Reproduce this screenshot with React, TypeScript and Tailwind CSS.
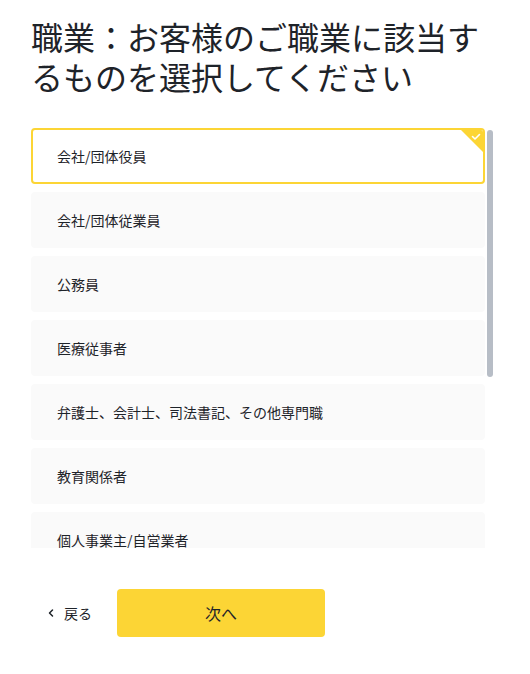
import React, { useState } from "react";
import { ChevronLeft } from "lucide-react";

const occupations = [
  "会社/団体役員",
  "会社/団体従業員",
  "公務員",
  "医療従事者",
  "弁護士、会計士、司法書記、その他専門職",
  "教育関係者",
  "個人事業主/自営業者",
  "学生",
  "主婦/主夫",
  "無職",
  "その他",
];

const App = () => {
  const [selected, setSelected] = useState<number>(0);

  return (
    <div
      className="w-[530px] h-[674px] bg-white text-[#1e2329] px-[31px] pt-[16px]"
      style={{ fontFamily: '"Noto Sans CJK JP", "Noto Sans", sans-serif' }}
    >
      {/* Title */}
      <h1 className="text-[32px] leading-[40px] font-normal text-[#1e2329] pr-[2px]">
        職業：お客様のご職業に該当するものを選択してください
      </h1>

      {/* Options list + scrollbar */}
      <div className="mt-[32px] flex gap-[2px]">
        <div className="h-[420px] w-[454px] overflow-y-auto [scrollbar-width:none]">
          <div className="flex flex-col gap-2">
            {occupations.map((item, i) => (
              <button
                key={item}
                onClick={() => setSelected(i)}
                className={`relative h-[56px] shrink-0 flex items-center pl-[24px] text-left text-[14px] rounded-[4px] border-2 overflow-hidden ${
                  selected === i
                    ? "border-[#fcd535] bg-white"
                    : "border-transparent bg-[#fafafa]"
                }`}
              >
                {item}
                {selected === i && (
                  <svg
                    className="absolute top-0 right-0"
                    width="22"
                    height="22"
                    viewBox="0 0 22 22"
                  >
                    <polygon points="0,0 22,0 22,22" fill="#fcd535" />
                    <path
                      d="M11.5 6.5 L14 9 L18.5 4.5"
                      stroke="white"
                      strokeWidth="1.6"
                      fill="none"
                      strokeLinecap="round"
                      strokeLinejoin="round"
                    />
                  </svg>
                )}
              </button>
            ))}
          </div>
        </div>
        {/* scrollbar track */}
        <div className="w-[6px] pt-[2px]">
          <div className="h-[247px] rounded-full bg-[#b7bdc6]"></div>
        </div>
      </div>

      {/* Footer buttons */}
      <div className="mt-[41px] flex items-center gap-3">
        <button className="w-[74px] h-[48px] flex items-center pl-[14px] gap-[7px] text-[14px] text-[#1e2329]">
          <ChevronLeft className="w-[12px] h-[12px] shrink-0" strokeWidth={3} />
          <span>戻る</span>
        </button>
        <button className="w-[208px] h-[48px] rounded-[4px] bg-[#fcd535] text-[16px] text-[#1e2329]">
          次へ
        </button>
      </div>
    </div>
  );
};

export default App;
